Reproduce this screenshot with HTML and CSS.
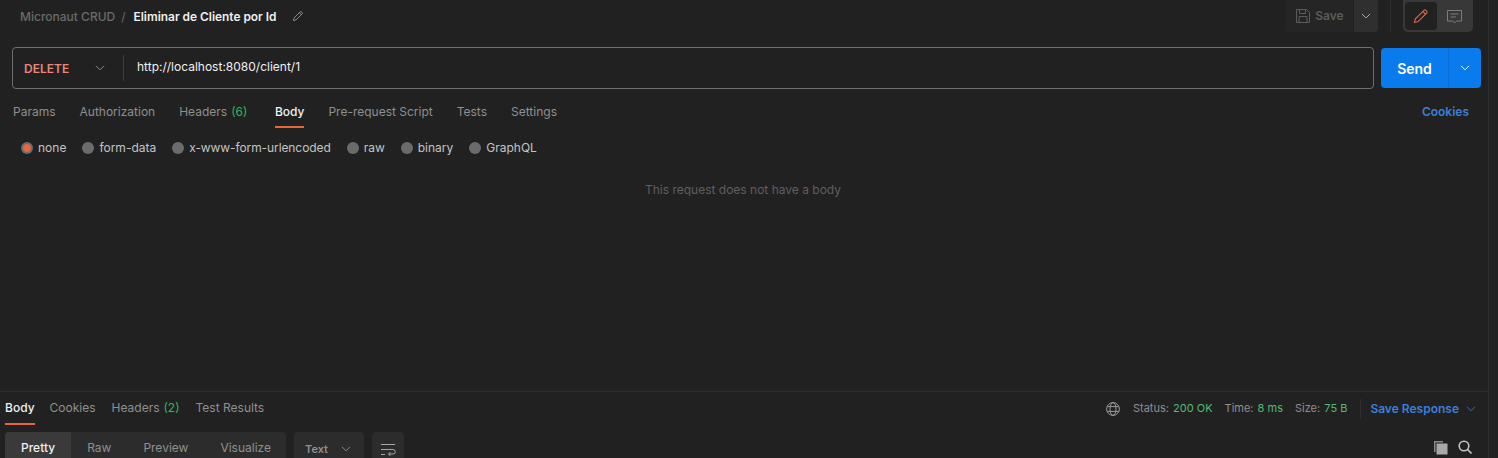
FILE: index.html
```html
<!DOCTYPE html>
<html lang="en">
<head>
<meta charset="utf-8">
<title>Eliminar de Cliente por Id</title>
<link rel="stylesheet" href="styles.css">
</head>
<body>
<div class="app">
  <main class="pane">
    <section class="request">
      <header class="topbar">
        <div class="crumbs">
          <span class="crumb-parent">Micronaut CRUD</span>
          <span class="crumb-sep">/</span>
          <span class="crumb-name">Eliminar de Cliente por Id</span>
          <svg class="crumb-edit" width="12" height="12" viewBox="0 0 12 12" fill="none" stroke="#8a8a8a" stroke-width="1"><path d="M1.5 10.5l.6-2.6 6-6a1.1 1.1 0 0 1 1.6 0l.4.4a1.1 1.1 0 0 1 0 1.6l-6 6z"/><path d="M7.3 2.7l2 2"/></svg>
        </div>
        <div class="actions">
          <div class="save">
            <span class="save-main">
              <svg width="16" height="16" viewBox="0 0 16 16" fill="none" stroke="#5c5c5c" stroke-width="1"><path d="M1.5 1.5h10l3 3v10h-13z"/><path d="M4.5 1.5v4h6v-4"/><path d="M4 14.5v-6h8v6"/></svg>
              <span>Save</span>
            </span>
            <span class="save-more">
              <svg width="10" height="6" viewBox="0 0 10 6" fill="none" stroke="#a6a6a6" stroke-width="1"><path d="M1 1l4 4 4-4"/></svg>
            </span>
          </div>
          <span class="vline"></span>
          <div class="toggle">
            <span class="toggle-on">
              <svg width="16" height="16" viewBox="0 0 16 16" fill="none" stroke="#d9654c" stroke-width="1.1"><path d="M1.5 14.5l.9-3.6 8.6-8.6a1.3 1.3 0 0 1 1.8 0l.9.9a1.3 1.3 0 0 1 0 1.8l-8.6 8.6z"/><path d="M9.8 3.5l2.7 2.7"/></svg>
            </span>
            <span class="toggle-off">
              <svg width="15" height="15" viewBox="0 0 15 15" fill="none" stroke="#7d7d7d" stroke-width="1"><path d="M.5 1.5h14v10.5h-5l-2 2-2-2h-5z"/><path d="M3.5 5h8M3.5 8h5.5"/></svg>
            </span>
          </div>
        </div>
      </header>

      <div class="url-row">
        <div class="url-box">
          <div class="method">
            <span class="method-name">DELETE</span>
            <svg width="10" height="6" viewBox="0 0 10 6" fill="none" stroke="#8c8c8c" stroke-width="1"><path d="M1 .8l4 4 4-4"/></svg>
          </div>
          <span class="url">http://localhost:8080/client/1</span>
        </div>
        <div class="send">
          <span class="send-main">Send</span>
          <span class="send-more">
            <svg width="10" height="6" viewBox="0 0 10 6" fill="none" stroke="#fff" stroke-width="1"><path d="M1 .8l4 4 4-4"/></svg>
          </span>
        </div>
      </div>

      <nav class="tabs req-tabs">
        <span class="tab">Params</span>
        <span class="tab">Authorization</span>
        <span class="tab">Headers <em class="count">(6)</em></span>
        <span class="tab active">Body</span>
        <span class="tab">Pre-request Script</span>
        <span class="tab">Tests</span>
        <span class="tab">Settings</span>
        <span class="cookies">Cookies</span>
      </nav>

      <div class="radios">
        <label class="radio"><i class="dot on"></i>none</label>
        <label class="radio"><i class="dot"></i>form-data</label>
        <label class="radio radio-long"><i class="dot"></i>x-www-form-urlencoded</label>
        <label class="radio"><i class="dot"></i>raw</label>
        <label class="radio"><i class="dot"></i>binary</label>
        <label class="radio"><i class="dot"></i>GraphQL</label>
      </div>

      <p class="empty">This request does not have a body</p>
    </section>

    <section class="response">
      <div class="res-head">
        <nav class="tabs res-tabs">
          <span class="tab active">Body</span>
          <span class="tab">Cookies</span>
          <span class="tab">Headers <em class="count">(2)</em></span>
          <span class="tab">Test Results</span>
        </nav>
        <div class="stats">
          <svg class="globe" width="14" height="14" viewBox="0 0 14 14" fill="none" stroke="#9a9a9a" stroke-width="1"><circle cx="7" cy="7" r="6.4"/><ellipse cx="7" cy="7" rx="3" ry="6.4"/><path d="M1.2 4.6h11.6M1.2 9.4h11.6"/></svg>
          <span class="stat">Status: <b>200 OK</b></span>
          <span class="stat">Time: <b>8 ms</b></span>
          <span class="stat">Size: <b>75 B</b></span>
          <span class="vline short"></span>
          <span class="save-response">Save Response</span>
          <svg width="10" height="6" viewBox="0 0 10 6" fill="none" stroke="#3b6fc4" stroke-width="1"><path d="M1 .8l4 4 4-4"/></svg>
        </div>
      </div>
      <div class="res-tools">
        <div class="views">
          <span class="view active">Pretty</span>
          <span class="view">Raw</span>
          <span class="view">Preview</span>
          <span class="view">Visualize</span>
        </div>
        <div class="format">
          <span>Text</span>
          <svg width="10" height="6" viewBox="0 0 10 6" fill="none" stroke="#8c8c8c" stroke-width="1"><path d="M1 .8l4 4 4-4"/></svg>
        </div>
        <div class="wrap">
          <svg width="16" height="13" viewBox="0 0 16 13" fill="none" stroke="#a6a6a6" stroke-width="1"><path d="M1 1.5h14M1 6.5h12a2 2 0 0 1 0 4.5H8.5"/><path d="M10.5 9l-2 2 2 2M1 11.5h4"/></svg>
        </div>
        <div class="res-icons">
          <svg width="15" height="15" viewBox="0 0 15 15"><path d="M1 1h9v1.5H2.5V12H1z" fill="#8a8a8a"/><rect x="3.5" y="3.5" width="11" height="11" fill="#a9a9a9"/></svg>
          <svg width="14" height="14" viewBox="0 0 14 14" fill="none" stroke="#c4c4c4" stroke-width="1.6"><circle cx="6" cy="6" r="4.8"/><path d="M9.5 9.5l4 4"/></svg>
        </div>
      </div>
    </section>
  </main>
</div>
</body>
</html>
```

FILE: styles.css
```css
* { box-sizing: border-box; }
html, body { margin: 0; height: 100%; }
body {
  background: #212121;
  color: #a6a6a6;
  font-family: Inter, "Liberation Sans", sans-serif;
  font-size: 12px;
  overflow: hidden;
}
.app { width: 1498px; height: 458px; overflow: hidden; }
.pane {
  width: 1489px;
  height: 458px;
  border-right: 1px solid #2e2e2e;
  display: flex;
  flex-direction: column;
}
.request { height: 391px; flex: none; }

.topbar {
  height: 47px;
  display: flex;
  justify-content: space-between;
  align-items: flex-start;
  padding-right: 15px;
}
.crumbs {
  display: flex;
  align-items: center;
  height: 32px;
  padding-left: 20px;
  gap: 6px;
}
.crumb-parent { color: #6b6b6b; font-weight: 500; }
.crumb-sep { color: #6b6b6b; margin-right: 2px; }
.crumb-name { color: #f0f0f0; font-weight: 600; font-size: 11.9px; }
.crumb-edit { margin-left: 9px; }

.actions { display: flex; align-items: flex-start; }
.save { display: flex; height: 32px; }
.save-main {
  width: 67px;
  padding-bottom: 1px;
  display: flex;
  align-items: center;
  justify-content: center;
  gap: 4px;
  background: #252525;
  color: #5c5c5c;
  font-weight: 600;
  border-radius: 0 0 0 4px;
}
.save-more {
  width: 24px;
  margin-left: 1px;
  display: flex;
  align-items: center;
  justify-content: center;
  background: #2f2f2f;
  border-radius: 0 0 4px 0;
}
.vline { width: 1px; height: 32px; background: #2e2e2e; margin: 0 12px; }
.toggle {
  width: 70px;
  height: 32px;
  padding: 2px;
  display: flex;
  background: #383838;
  border-radius: 0 0 5px 5px;
}
.toggle-on {
  width: 32px;
  height: 28px;
  display: flex;
  align-items: center;
  justify-content: center;
  background: #212121;
  border-radius: 4px;
}
.toggle-off {
  flex: 1;
  display: flex;
  align-items: center;
  justify-content: center;
}

.url-row {
  display: flex;
  align-items: center;
  height: 42px;
  padding-left: 12px;
  gap: 7px;
}
.url-box {
  width: 1362px;
  height: 42px;
  display: flex;
  align-items: center;
  border: 1px solid #6e6e6e;
  border-radius: 4px;
}
.method {
  width: 111px;
  height: 26px;
  padding: 0 18px 0 11px;
  display: flex;
  align-items: center;
  justify-content: space-between;
  border-right: 1px solid #3d3d3d;
}
.method-name { color: #e8887c; font-weight: 600; }
.url { color: #f0f0f0; padding-left: 13px; margin-top: -4px; }
.send {
  width: 100px;
  height: 40px;
  display: flex;
  color: #fff;
  background: #097bed;
  border-radius: 4px;
}
.send-main {
  flex: 1;
  display: flex;
  align-items: center;
  justify-content: center;
  font-size: 14px;
  font-weight: 600;
}
.send-more {
  width: 33px;
  display: flex;
  align-items: center;
  justify-content: center;
  border-left: 1px solid #0a6fd4;
}

.tabs { display: flex; align-items: stretch; }
.req-tabs { height: 39px; padding-left: 13px; gap: 24px; }
.req-tabs .tab { padding-top: 8px; }
.req-tabs .active { margin-left: 3.5px; }
.tab {
  display: flex;
  align-items: center;
  gap: 4px;
  color: #8f8f8f;
  border-bottom: 2px solid transparent;
}
.tab.active { color: #f0f0f0; font-weight: 500; border-bottom-color: #e8663d; }
.count { color: #2fb55f; font-style: normal; }
.cookies {
  margin-left: auto;
  display: flex;
  align-items: center;
  padding: 6px 19px 0 0;
  color: #3b7fd9;
  font-weight: 600;
}

.radios {
  display: flex;
  align-items: center;
  height: 40px;
  padding: 0 0 1px 21px;
  gap: 16px;
}
.radio { display: flex; align-items: center; gap: 5px; color: #c4c4c4; }
.radio-long { letter-spacing: -0.09px; }
.dot {
  width: 12px;
  height: 12px;
  border-radius: 50%;
  background: #6b6b6b;
}
.dot.on {
  background: radial-gradient(circle, #e8663d 0 3.5px, #6b6b6b 4.5px);
}
.empty {
  margin: 14px 0 0;
  padding-right: 2px;
  text-align: center;
  color: #5f5f5f;
}

.response { flex: 1; border-top: 1px solid #2e2e2e; min-height: 0; }
.res-head {
  height: 33px;
  display: flex;
  justify-content: space-between;
  padding-right: 12px;
}
.res-tabs { padding-left: 5px; gap: 16px; }
.res-tabs .active { margin-right: -1px; }
.stats { display: flex; align-items: center; }
.globe { margin-right: 13px; }
.stat { color: #8f8f8f; font-size: 11px; margin-right: 12px; padding-bottom: 2px; }
.stat b { color: #4ebd73; font-weight: 400; margin-left: 1px; }
.vline.short { height: 20px; margin: 0 9px 0 1px; }
.save-response { color: #3b7fd9; font-weight: 600; margin-right: 7px; padding-bottom: 1px; }

.res-tools {
  height: 40px;
  margin-top: 7px;
  display: flex;
  align-items: flex-start;
  padding: 0 16px 0 5px;
}
.views {
  display: flex;
  width: 281px;
  height: 32px;
  background: #2c2c2c;
  border-radius: 4px;
  overflow: hidden;
}
.view {
  display: flex;
  align-items: center;
  justify-content: center;
  padding: 0 16px 2px;
  color: #8f8f8f;
}
.view.active { background: #3a3a3a; color: #f0f0f0; font-weight: 500; }
.format {
  width: 70px;
  height: 32px;
  margin-left: 8px;
  display: flex;
  align-items: center;
  justify-content: space-between;
  padding: 1px 13px 0 11px;
  background: #2c2c2c;
  border-radius: 4px;
  color: #8f8f8f;
  font-size: 11px;
  font-weight: 600;
}
.wrap {
  width: 32px;
  height: 32px;
  margin-left: 8px;
  display: flex;
  align-items: center;
  justify-content: center;
  padding-top: 3px;
  background: #2c2c2c;
  border-radius: 4px;
}
.res-icons {
  margin-left: auto;
  display: flex;
  align-items: center;
  gap: 10px;
  height: 32px;
  padding-bottom: 2px;
}
```
